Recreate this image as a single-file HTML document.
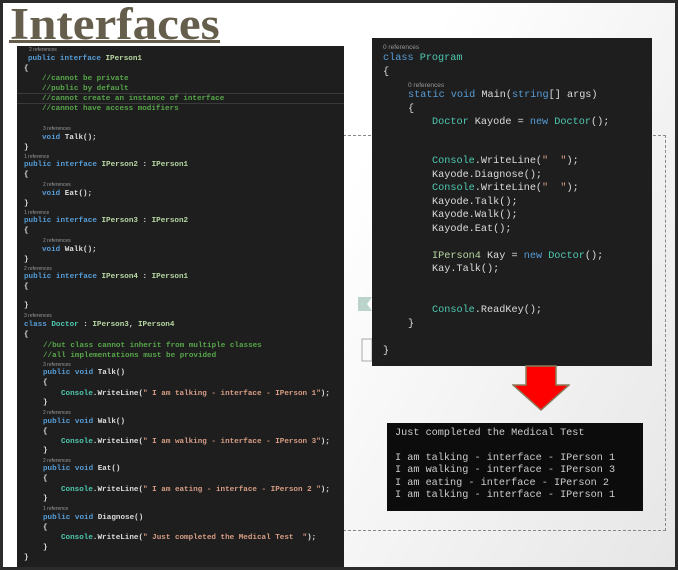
<!DOCTYPE html>
<html><head><meta charset="utf-8"><style>
*{margin:0;padding:0;box-sizing:border-box}
body{width:678px;height:570px;overflow:hidden;background:#2b2b2b;position:relative;font-family:"Liberation Sans",sans-serif}
.slide{position:absolute;left:3px;top:3px;width:672px;height:564px;background:linear-gradient(120deg,#fff 0%,#fff 45%,#e6e6e6 100%)}
.title{position:absolute;left:10px;top:-2px;font-family:"Liberation Serif",serif;font-weight:bold;font-size:45px;color:#665e4c;transform:scaleX(1.09);transform-origin:0 0}
.uline{position:absolute;left:9px;top:40px;width:211px;height:3px;background:#665e4c}
.dash{position:absolute;left:343px;top:135px;width:323px;height:396px;border:1px dashed #888}
.panel{position:absolute;background:#1e1e1e;font-family:"Liberation Mono",monospace;color:#dcdcdc;white-space:pre}
.panel div{position:absolute;line-height:10px}
.L div{font-size:7.6px;font-weight:bold}
.L div.r{font-size:5px;color:#999;font-family:"Liberation Sans",sans-serif;font-weight:normal}
.R div{font-size:10.2px;line-height:13px}
.R div.r{font-size:6.5px;color:#999;font-family:"Liberation Sans",sans-serif}
.k{color:#569cd6}.t{color:#4ec9b0}.c{color:#57a64a}.s{color:#d69d85}.i{color:#b8d7a3}
.con{position:absolute;left:387px;top:423px;width:256px;height:88px;background:#0c0c0c;color:#cccccc;font-family:"Liberation Mono",monospace;font-size:10.2px;white-space:pre}
.con div{position:absolute;left:8px;line-height:12px}
</style></head><body>
<div class="slide"></div>
<div class="title">Interfaces</div>
<div class="uline"></div>
<div class="dash"></div>
<svg style="position:absolute;left:358px;top:296px" width="16" height="70"><path d="M0 1H14L9 8L14 15H0Z" fill="#bcd3cc"/><rect x="4" y="43" width="10" height="22" fill="none" stroke="#aaa"/></svg>

<div class="panel L" style="left:17px;top:46px;width:327px;height:521px">
<div class="r" style="left:12px;top:-1px">2 references</div>
<div style="left:11px;top:8px"><span class="k">public interface</span> <span class="i">IPerson1</span></div>
<div style="left:7px;top:18px">{</div>
<div class="c" style="left:25px;top:28px">//cannot be private</div>
<div class="c" style="left:25px;top:38px">//public by default</div>
<div style="left:0;top:47px;width:327px;height:11px;border-top:1px solid #3a3a3a;border-bottom:1px solid #3a3a3a"></div>
<div class="c" style="left:25px;top:48px">//cannot create an instance of interface</div>
<div class="c" style="left:25px;top:58px">//cannot have access modifiers</div>
<div class="r" style="left:26px;top:78px">3 references</div>
<div style="left:25px;top:87px"><span class="k">void</span> Talk();</div>
<div style="left:7px;top:97px">}</div>
<div class="r" style="left:7px;top:106px">1 reference</div>
<div style="left:7px;top:114px"><span class="k">public interface</span> <span class="i">IPerson2</span> : <span class="i">IPerson1</span></div>
<div style="left:7px;top:124px">{</div>
<div class="r" style="left:26px;top:134px">2 references</div>
<div style="left:25px;top:143px"><span class="k">void</span> Eat();</div>
<div style="left:7px;top:153px">}</div>
<div class="r" style="left:7px;top:162px">1 reference</div>
<div style="left:7px;top:170px"><span class="k">public interface</span> <span class="i">IPerson3</span> : <span class="i">IPerson2</span></div>
<div style="left:7px;top:180px">{</div>
<div class="r" style="left:26px;top:190px">2 references</div>
<div style="left:25px;top:199px"><span class="k">void</span> Walk();</div>
<div style="left:7px;top:209px">}</div>
<div class="r" style="left:7px;top:218px">2 references</div>
<div style="left:7px;top:226px"><span class="k">public interface</span> <span class="i">IPerson4</span> : <span class="i">IPerson1</span></div>
<div style="left:7px;top:236px">{</div>
<div style="left:7px;top:255px">}</div>
<div class="r" style="left:7px;top:265px">3 references</div>
<div style="left:7px;top:274px"><span class="k">class</span> <span class="t">Doctor</span> : <span class="i">IPerson3</span>, <span class="i">IPerson4</span></div>
<div style="left:7px;top:284px">{</div>
<div class="c" style="left:26px;top:295px">//but class cannot inherit from multiple classes</div>
<div class="c" style="left:26px;top:305px">//all implementations must be provided</div>
<div class="r" style="left:26px;top:314px">3 references</div>
<div style="left:26px;top:322px"><span class="k">public void</span> Talk()</div>
<div style="left:26px;top:332px">{</div>
<div style="left:44px;top:343px"><span class="t">Console</span>.WriteLine(<span class="s">" I am talking - interface - IPerson 1"</span>);</div>
<div style="left:26px;top:352px">}</div>
<div class="r" style="left:26px;top:362px">2 references</div>
<div style="left:26px;top:371px"><span class="k">public void</span> Walk()</div>
<div style="left:26px;top:381px">{</div>
<div style="left:44px;top:391px"><span class="t">Console</span>.WriteLine(<span class="s">" I am walking - interface - IPerson 3"</span>);</div>
<div style="left:26px;top:400px">}</div>
<div class="r" style="left:26px;top:410px">2 references</div>
<div style="left:26px;top:418px"><span class="k">public void</span> Eat()</div>
<div style="left:26px;top:428px">{</div>
<div style="left:44px;top:439px"><span class="t">Console</span>.WriteLine(<span class="s">" I am eating - interface - IPerson 2 "</span>);</div>
<div style="left:26px;top:448px">}</div>
<div class="r" style="left:26px;top:458px">1 reference</div>
<div style="left:26px;top:467px"><span class="k">public void</span> Diagnose()</div>
<div style="left:26px;top:477px">{</div>
<div style="left:44px;top:487px"><span class="t">Console</span>.WriteLine(<span class="s">" Just completed the Medical Test  "</span>);</div>
<div style="left:26px;top:497px">}</div>
<div style="left:7px;top:507px">}</div>
</div>

<div class="panel R" style="left:372px;top:38px;width:280px;height:328px">
<div class="r" style="left:11px;top:3px">0 references</div>
<div style="left:11px;top:14px"><span class="k">class</span> <span class="t">Program</span></div>
<div style="left:11px;top:28px">{</div>
<div class="r" style="left:36px;top:41px">0 references</div>
<div style="left:36px;top:51px"><span class="k">static void</span> Main(<span class="k">string</span>[] args)</div>
<div style="left:36px;top:65px">{</div>
<div style="left:60px;top:78px"><span class="t">Doctor</span> Kayode = <span class="k">new</span> <span class="t">Doctor</span>();</div>
<div style="left:60px;top:117px"><span class="t">Console</span>.WriteLine(<span class="s">"  "</span>);</div>
<div style="left:60px;top:131px">Kayode.Diagnose();</div>
<div style="left:60px;top:144px"><span class="t">Console</span>.WriteLine(<span class="s">"  "</span>);</div>
<div style="left:60px;top:158px">Kayode.Talk();</div>
<div style="left:60px;top:171px">Kayode.Walk();</div>
<div style="left:60px;top:185px">Kayode.Eat();</div>
<div style="left:60px;top:212px"><span class="i">IPerson4</span> Kay = <span class="k">new</span> <span class="t">Doctor</span>();</div>
<div style="left:60px;top:225px">Kay.Talk();</div>
<div style="left:60px;top:266px"><span class="t">Console</span>.ReadKey();</div>
<div style="left:36px;top:280px">}</div>
<div style="left:11px;top:307px">}</div>
</div>

<svg style="position:absolute;left:512px;top:365px" width="58" height="46"><path d="M14 1H44V20H57L29 45L1 20H14Z" fill="#f00" stroke="#8a7a5a" stroke-width="1.5"/></svg>

<div class="con">
<div style="top:5px">Just completed the Medical Test</div>
<div style="top:30px">I am talking - interface - IPerson 1</div>
<div style="top:42px">I am walking - interface - IPerson 3</div>
<div style="top:55px">I am eating - interface - IPerson 2</div>
<div style="top:67px">I am talking - interface - IPerson 1</div>
</div>
</body></html>
